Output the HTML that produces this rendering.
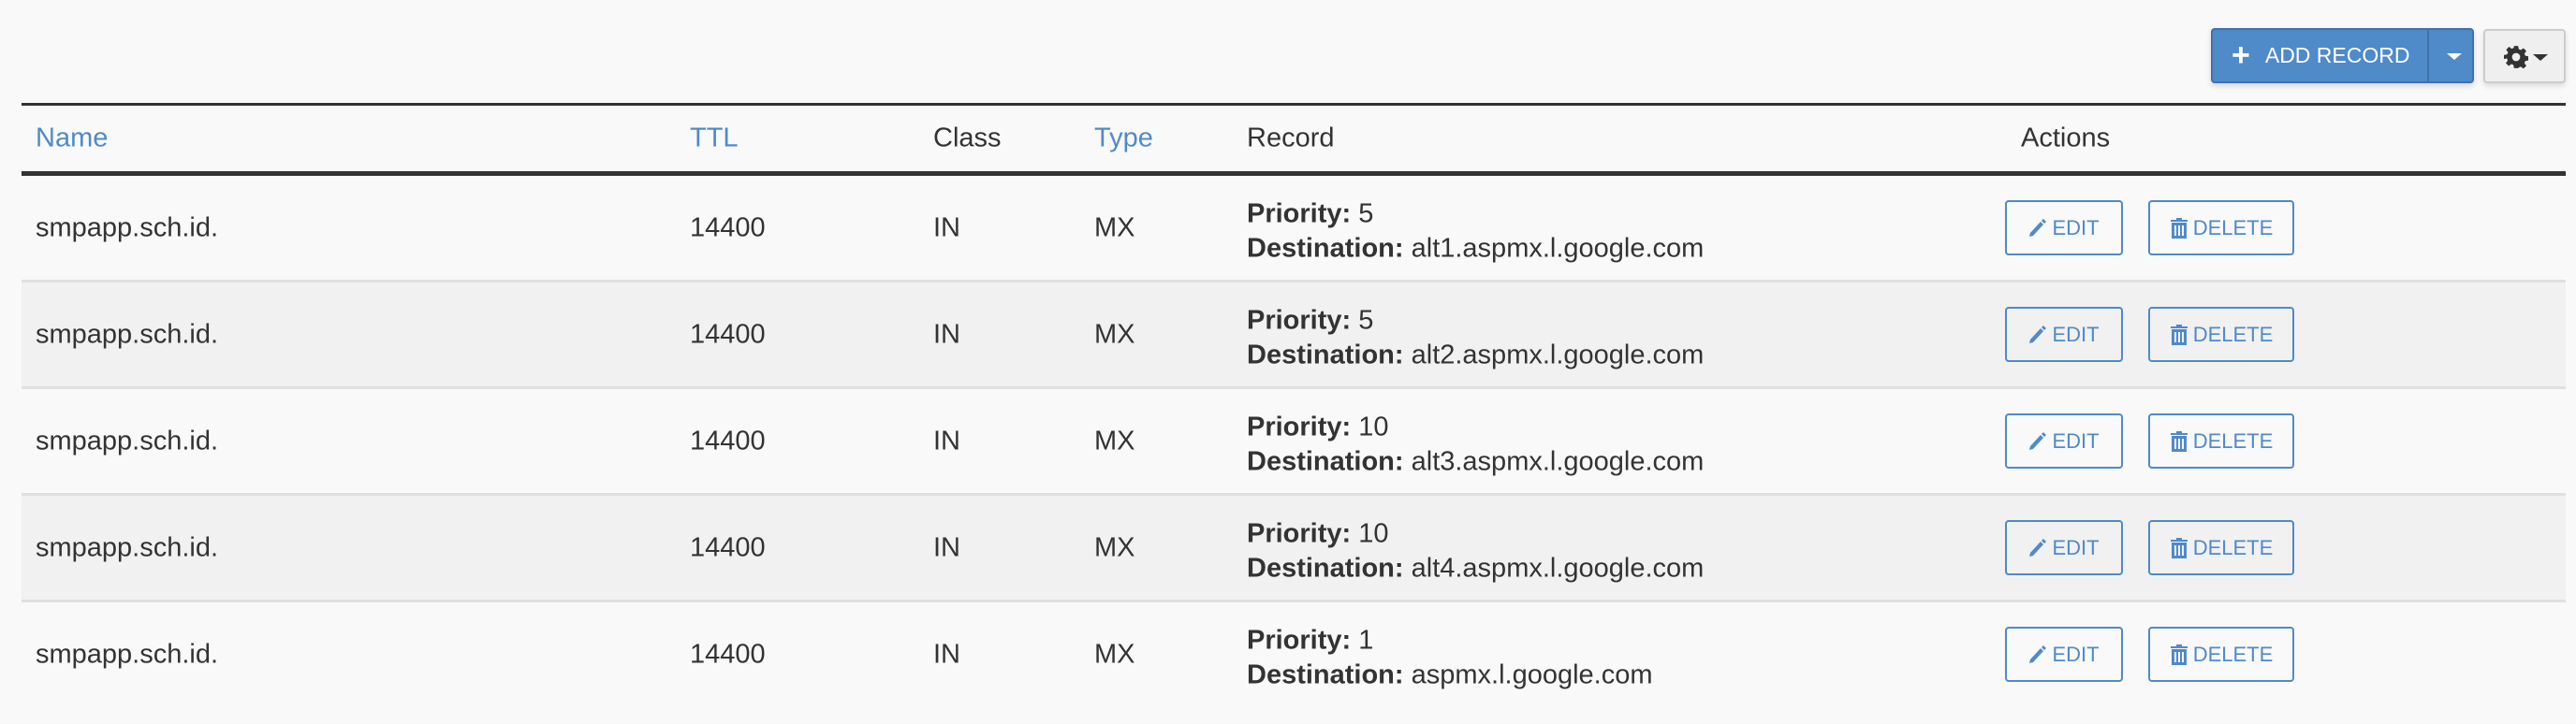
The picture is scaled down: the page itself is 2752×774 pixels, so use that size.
<!DOCTYPE html>
<html><head><style>
body{margin:0;width:2752px;height:774px;background:#f9f9f9;font-family:"Liberation Sans",sans-serif;color:#333;position:relative;overflow:hidden}
.a{position:absolute}
.btn{position:absolute;border:2px solid #4f8ac9;border-radius:4px;color:#4f8ac9;font-size:22px;box-sizing:border-box;display:flex;align-items:center;justify-content:center;gap:5px;height:59px}
.row{position:absolute;left:23px;width:2718px;height:114px;border-bottom:3px solid #e0e0e0;box-sizing:border-box}
.t{position:absolute;font-size:29px;transform:translateY(-50%);white-space:nowrap}
.h{position:absolute;top:148px;font-size:29px;transform:translateY(-50%)}
</style></head><body>
<div class="a" style="left:2362px;top:30px;width:281px;height:59px;background:#4f8ac9;border:2px solid #3e72ad;border-radius:4px;box-sizing:border-box;box-shadow:0 3px 6px rgba(0,0,0,.15)">
 <div class="a" style="left:20px;top:0;height:55px;display:flex;align-items:center;color:#fff;font-size:23px"><span style="font-size:34px;font-weight:bold;margin-right:16px">+</span>ADD RECORD</div>
 <div class="a" style="left:229px;top:0;width:2px;height:55px;background:#3e72ad"></div>
 <div class="a" style="left:250px;top:25px;border-left:8px solid transparent;border-right:8px solid transparent;border-top:7px solid #fff"></div>
</div>
<div class="a" style="left:2653px;top:31px;width:88px;height:58px;background:#efefef;border:2px solid #ccc;border-radius:4px;box-sizing:border-box;box-shadow:0 3px 6px rgba(0,0,0,.12)">
 <svg class="a" style="left:20px;top:15px" width="26" height="26" viewBox="0 0 24 24"><path fill="#333" d="M10 1h4l.6 3.2 2 .9 2.7-1.9 2.8 2.8-1.9 2.7.9 2 3.2.6v4l-3.2.6-.9 2 1.9 2.7-2.8 2.8-2.7-1.9-2 .9L14 23h-4l-.6-3.2-2-.9-2.7 1.900-2.8-2.8 1.9-2.7-.9-2L0 14v-4l3.2-.6.9-2L2.2 4.7 5 1.9l2.7 1.9 2-.9zM12 8a4 4 0 100 8 4 4 0 000-8z"/></svg>
 <div class="a" style="left:51px;top:25px;border-left:8px solid transparent;border-right:8px solid transparent;border-top:7px solid #333"></div>
</div>
<div class="a" style="left:23px;top:110px;width:2718px;height:3px;background:#333"></div>
<div class="h" style="left:38px;color:#4f8ac9">Name</div>
<div class="h" style="left:737px;color:#4f8ac9">TTL</div>
<div class="h" style="left:997px">Class</div>
<div class="h" style="left:1169px;color:#4f8ac9">Type</div>
<div class="h" style="left:1332px">Record</div>
<div class="h" style="left:2159px">Actions</div>
<div class="a" style="left:23px;top:183px;width:2718px;height:5px;background:#333"></div>
<div id="rows"></div>
<script>
var d=[["5","alt1.aspmx.l.google.com"],["5","alt2.aspmx.l.google.com"],["10","alt3.aspmx.l.google.com"],["10","alt4.aspmx.l.google.com"],["1","aspmx.l.google.com"]];
var h="";
d.forEach(function(r,i){var top=188+i*114,c=top+56;
h+='<div class="row" style="top:'+top+'px;background:'+(i%2?'#f1f1f1':'#f9f9f9')+';'+(i==4?'border-bottom:none':'')+'"></div>';
h+='<div class="t" style="left:38px;top:'+c+'px">smpapp.sch.id.</div><div class="t" style="left:737px;top:'+c+'px">14400</div><div class="t" style="left:997px;top:'+c+'px">IN</div><div class="t" style="left:1169px;top:'+c+'px">MX</div>';
h+='<div class="t" style="left:1332px;top:'+(c-15)+'px"><b>Priority:</b> '+r[0]+'</div><div class="t" style="left:1332px;top:'+(c+22)+'px"><b>Destination:</b> '+r[1]+'</div>';
h+='<div class="btn" style="left:2142px;top:'+(top+26)+'px;width:126px"><svg width="20" height="22" viewBox="0 0 20 22"><path fill="#4f8ac9" d="M2 16l11-12 3 3-11 12-4 1zM14 3l2-2 3 3-2 2z"/></svg>EDIT</div>';
h+='<div class="btn" style="left:2295px;top:'+(top+26)+'px;width:156px"><svg width="20" height="24" viewBox="0 0 20 24"><path fill="#4f8ac9" d="M7 1h6v2h6v2H1V3h6zM2 6h16v17H2zm3 3v11h2V9zm4 0v11h2V9zm4 0v11h2V9z"/></svg>DELETE</div>';
});
document.getElementById("rows").innerHTML=h;
</script>
</body></html>
